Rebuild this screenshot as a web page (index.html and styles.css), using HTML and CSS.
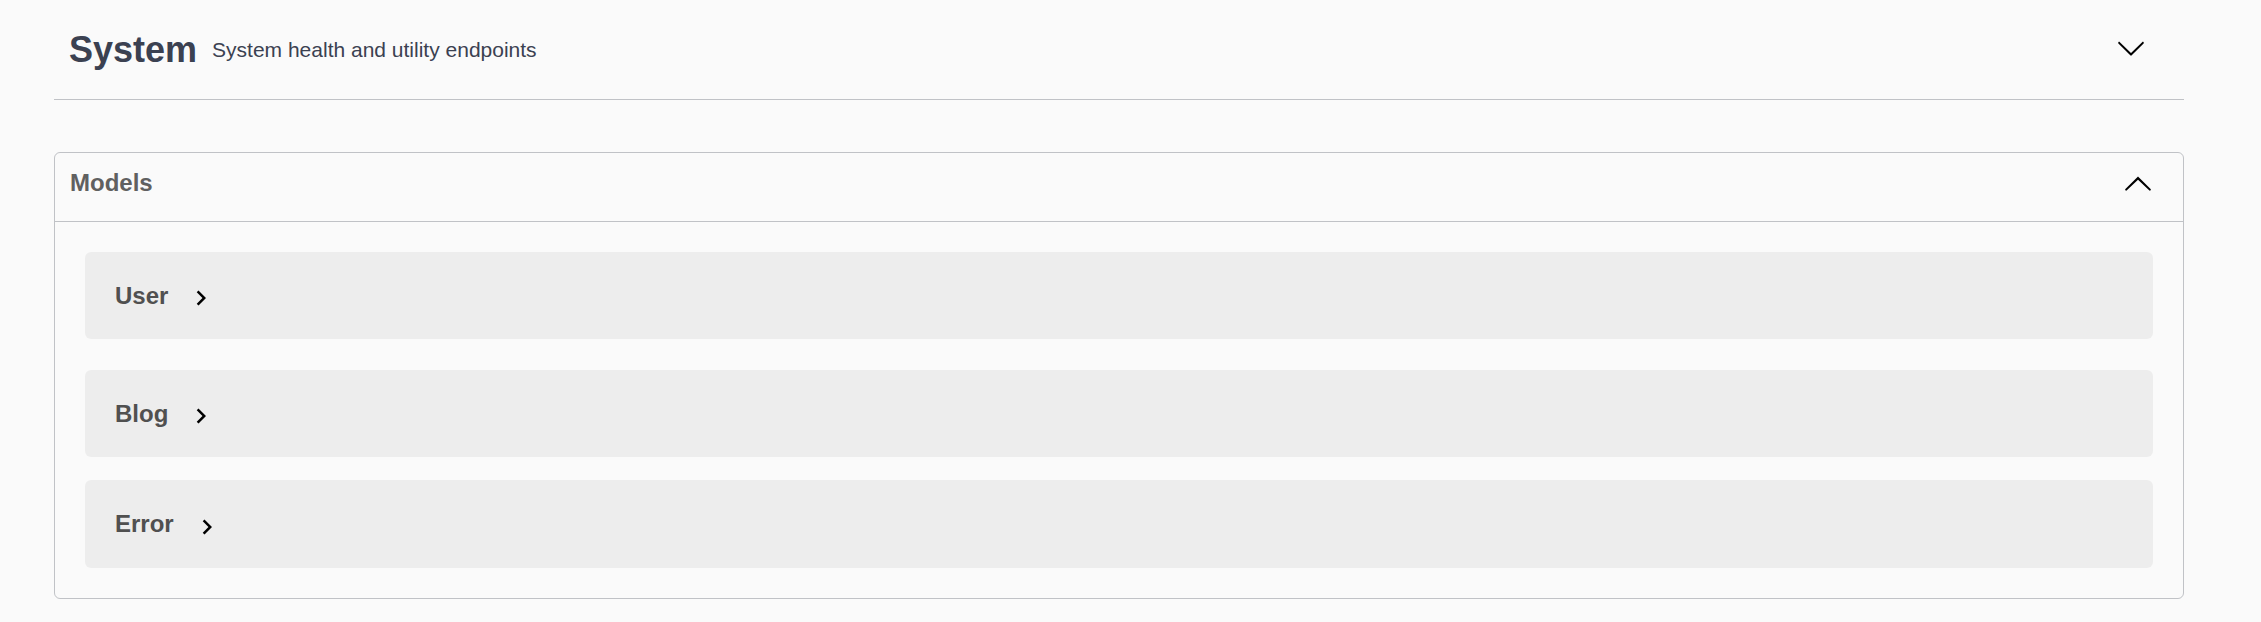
FILE: index.html
```html
<!DOCTYPE html>
<html lang="en">
<head>
<meta charset="utf-8">
<title>System</title>
<link rel="stylesheet" href="styles.css">
</head>
<body>
<div class="wrapper">
  <div class="tag">
    <span class="tag-title">System</span>
    <small class="tag-desc">System health and utility endpoints</small>
    <svg class="tag-arrow" viewBox="0 0 20 20" width="30" height="30"><path d="M17.418 6.109c.272-.268.709-.268.979 0s.271.701 0 .969l-7.908 7.83c-.27.268-.707.268-.979 0l-7.908-7.83c-.27-.268-.27-.701 0-.969.271-.268.709-.268.979 0L10 13.25l7.418-7.141z"/></svg>
  </div>

  <section class="models">
    <div class="models-head">
      <span class="models-title">Models</span>
      <svg class="models-arrow" viewBox="0 0 20 20" width="30" height="30"><path d="M17.418 14.908c.272.268.709.268.979 0s.271-.701 0-.969l-7.908-7.83c-.27-.268-.707-.268-.979 0l-7.908 7.83c-.27.268-.27.701 0 .969.271.268.709.268.979 0L10 7.767l7.418 7.141z"/></svg>
    </div>
    <div class="models-body">
      <div class="model model-first">
        <span class="model-title">User</span>
        <svg class="model-toggle" viewBox="0 0 24 24" width="30" height="30"><path d="M10 6L8.59 7.41 13.17 12l-4.58 4.59L10 18l6-6z"/></svg>
      </div>
      <div class="model">
        <span class="model-title">Blog</span>
        <svg class="model-toggle" viewBox="0 0 24 24" width="30" height="30"><path d="M10 6L8.59 7.41 13.17 12l-4.58 4.59L10 18l6-6z"/></svg>
      </div>
      <div class="model model-last">
        <span class="model-title">Error</span>
        <svg class="model-toggle" viewBox="0 0 24 24" width="30" height="30"><path d="M10 6L8.59 7.41 13.17 12l-4.58 4.59L10 18l6-6z"/></svg>
      </div>
    </div>
  </section>
</div>
</body>
</html>
```

FILE: styles.css
```css
html, body {
  margin: 0;
  padding: 0;
  background: #fafafa;
}

body {
  font-family: "Liberation Sans", Arial, sans-serif;
}

.wrapper {
  width: 2130px;
  margin-left: 54px;
}

.tag {
  display: flex;
  align-items: center;
  height: 99px;
  padding: 0 38px 0 15px;
  border-bottom: 1px solid rgba(59, 65, 81, 0.3);
}

.tag-title {
  font-size: 36px;
  font-weight: 700;
  color: #3b4151;
}

.tag-desc {
  flex: 1;
  font-size: 21px;
  font-weight: 400;
  padding: 0 15px;
  color: #3b4151;
}

.tag-arrow {
  display: block;
  flex: none;
  margin-bottom: 4px;
  fill: #000;
}

.models {
  margin-top: 52px;
  border: 1px solid rgba(59, 65, 81, 0.3);
  border-radius: 6px;
}

.models-head {
  display: flex;
  align-items: center;
  justify-content: space-between;
  padding: 15px 30px 23px 15px;
  border-bottom: 1px solid rgba(59, 65, 81, 0.3);
}

.models-title {
  font-size: 24px;
  font-weight: 700;
  color: #606060;
}

.models-arrow {
  display: block;
  fill: #000;
}

.models-body {
  padding: 30px 30px 30px;
}

.model {
  display: flex;
  align-items: center;
  height: 87px;
  padding: 0 30px;
  background: rgba(0, 0, 0, 0.05);
  border-radius: 6px;
  margin-bottom: 23px;
}

.model-first {
  margin-bottom: 31px;
}

.model-last {
  height: 88px;
  margin-bottom: 0;
}

.model-title {
  font-size: 24px;
  font-weight: 700;
  color: #505050;
}

.model-toggle {
  display: block;
  margin-left: 18px;
  margin-top: 5px;
  fill: #000;
}
```
